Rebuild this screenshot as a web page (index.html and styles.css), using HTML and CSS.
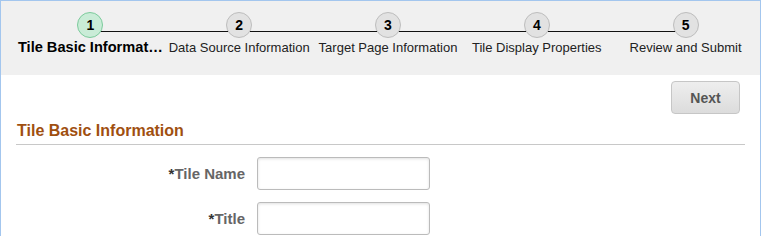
FILE: index.html
```html
<!DOCTYPE html>
<html lang="en">
<head>
    <meta charset="UTF-8">
    <meta name="viewport" content="width=device-width, initial-scale=1.0">
    <title>Tile Wizard - Tile Basic Information</title>
    <link rel="stylesheet" href="styles.css">
</head>
<body>
    <div class="wizard">
        <div class="train">
            <div class="step current">
                <div class="num">1</div>
                <div class="label">Tile Basic Informat…</div>
            </div>
            <div class="step">
                <div class="num">2</div>
                <div class="label">Data Source Information</div>
            </div>
            <div class="step">
                <div class="num">3</div>
                <div class="label">Target Page Information</div>
            </div>
            <div class="step">
                <div class="num">4</div>
                <div class="label">Tile Display Properties</div>
            </div>
            <div class="step">
                <div class="num">5</div>
                <div class="label">Review and Submit</div>
            </div>
        </div>

        <div class="toolbar">
            <button class="btn">Next</button>
        </div>

        <h2 class="section">Tile Basic Information</h2>

        <div class="form">
            <div class="row">
                <label for="tileName"><span class="req">*</span>Tile Name</label>
                <input type="text" id="tileName">
            </div>
            <div class="row">
                <label for="tileTitle"><span class="req">*</span>Title</label>
                <input type="text" id="tileTitle">
            </div>
        </div>
    </div>
</body>
</html>
```

FILE: styles.css
```css
html, body {
    margin: 0;
    height: 100%;
}
body {
    font-family: Arial, "Liberation Sans", sans-serif;
    background: white;
}
.wizard {
    border: 1px solid #a3c6ee;
    border-bottom: none;
    min-height: 100%;
    box-sizing: border-box;
}
.train {
    display: flex;
    background: #f0f0f0;
    height: 74px;
    box-sizing: border-box;
    padding: 11px 0 0 15px;
}
.step {
    width: 149px;
    display: flex;
    flex-direction: column;
    align-items: center;
    position: relative;
}
.step::after {
    content: "";
    position: absolute;
    top: 19px;
    left: 50%;
    width: 100%;
    height: 1px;
    background: #111;
}
.step:last-child::after {
    display: none;
}
.num {
    width: 24px;
    height: 24px;
    border: 1px solid #bdbdbd;
    border-radius: 50%;
    background: #e2e2e2;
    font-size: 14px;
    font-weight: bold;
    line-height: 24px;
    text-align: center;
    color: #000;
    position: relative;
    z-index: 1;
}
.current .num {
    background: #c9ecd7;
    border-color: #7ccb9c;
}
.label {
    margin-top: 2px;
    font-size: 13px;
    color: #222;
    white-space: nowrap;
}
.current .label {
    font-size: 14.6px;
    font-weight: bold;
    color: #000;
    margin-top: 1px;
}
.toolbar {
    display: flex;
    justify-content: flex-end;
    padding: 6px 20px 0 0;
}
.btn {
    width: 69px;
    height: 33px;
    font-family: inherit;
    font-size: 14px;
    font-weight: bold;
    color: #555;
    background: linear-gradient(#eeeeee, #dcdcdc);
    border: 1px solid #c6c6c6;
    border-radius: 4px;
    cursor: pointer;
}
.section {
    margin: 8px 15px 0 15px;
    padding: 0 0 4px 1px;
    font-size: 16px;
    color: #9f4f10;
    border-bottom: 1px solid #c8c8c8;
}
.form {
    padding-top: 12px;
}
.row {
    display: flex;
    align-items: center;
    margin-bottom: 12px;
}
.row label {
    width: 244px;
    padding-right: 12px;
    text-align: right;
    font-size: 15px;
    font-weight: bold;
    color: #666;
}
.req {
    color: #333;
}
.row input {
    width: 173px;
    height: 33px;
    box-sizing: border-box;
    border: 1px solid #bbb;
    border-radius: 3px;
    box-shadow: inset 0 1px 3px rgba(0,0,0,0.12);
}
```
